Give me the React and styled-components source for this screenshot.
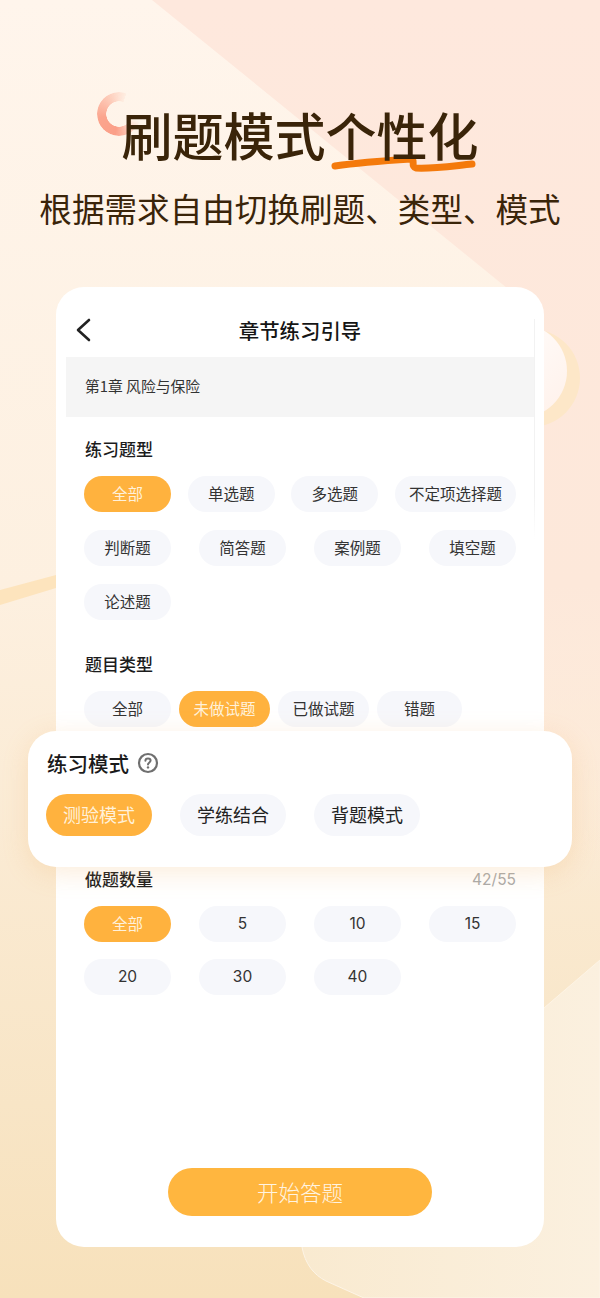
import React from 'react';
import styled, { createGlobalStyle } from 'styled-components';

const GlobalStyle = createGlobalStyle`
  html, body {
    margin: 0;
    padding: 0;
    background: #fbeeda;
  }
  * {
    box-sizing: border-box;
  }
`;

const Page = styled.div`
  position: relative;
  width: 600px;
  height: 1298px;
  overflow: hidden;
  display: flex;
  flex-direction: column;
  font-family: 'Noto Sans CJK SC', 'Noto Sans', sans-serif;
  background: linear-gradient(180deg, #fff5ec 0%, #fdf0e0 45%, #f8e5c6 85%, #f7e1bb 100%);
`;

const Backdrop = styled.svg`
  position: absolute;
  top: 0;
  left: 0;
  width: 600px;
  height: 1298px;
`;

const Hero = styled.header`
  position: relative;
  height: 287px;
  padding-top: 100px;
  display: flex;
  flex-direction: column;
  align-items: center;
`;

const Ring = styled.div`
  position: absolute;
  left: 97px;
  top: 92px;
  width: 44px;
  height: 44px;
  border-radius: 50%;
  background: conic-gradient(from 20deg, rgba(255, 190, 170, 0) 0deg, rgba(255, 190, 170, 0) 90deg, #fb9f88 170deg, #fba58e 240deg, #fdcdbb 310deg, rgba(255, 225, 210, 0.3) 360deg);
  -webkit-mask: radial-gradient(circle, transparent 12.5px, #000 13px);
  mask: radial-gradient(circle, transparent 12.5px, #000 13px);
`;

const Headline = styled.h1`
  position: relative;
  z-index: 0;
  margin: 0;
  font-size: 51px;
  line-height: 68px;
  font-weight: 500;
  color: #3a2409;
  white-space: nowrap;
`;

const Highlight = styled.span`
  position: relative;
  display: inline-block;
`;

const Scribble = styled.svg`
  position: absolute;
  z-index: -1;
  left: 0;
  top: 53px;
  width: 154px;
  height: 22px;
`;

const Subhead = styled.p`
  margin: 16px 0 0;
  font-size: 32.6px;
  line-height: 48px;
  font-weight: 400;
  color: #3a2409;
  white-space: nowrap;
`;

const Card = styled.main`
  position: relative;
  margin: 0 56px;
  height: 960px;
  padding: 0 10px 31px;
  display: flex;
  flex-direction: column;
  background: #fff;
  border-radius: 28px;
`;

const EdgeLine = styled.div`
  position: absolute;
  top: 32px;
  right: 9px;
  width: 1px;
  height: 220px;
  background: linear-gradient(180deg, #f2f2f2 0%, #f2f2f2 80%, rgba(242, 242, 242, 0) 100%);
`;

const NavBar = styled.div`
  position: relative;
  height: 70px;
  padding-top: 28px;
  display: flex;
  justify-content: center;
`;

const BackIcon = styled.svg`
  position: absolute;
  left: 8px;
  top: 30px;
  width: 18px;
  height: 26px;
`;

const NavTitle = styled.div`
  font-size: 20.4px;
  line-height: 30px;
  font-weight: 500;
  color: #151515;
`;

const Chapter = styled.div`
  height: 60px;
  padding: 0 0 3px 19px;
  display: flex;
  align-items: center;
  font-size: 14.8px;
  color: #333;
  background: #f5f5f5;
  white-space: pre;
`;

const Section = styled.section`
  margin-top: ${p => p.$top}px;
  padding: 0 18px;
`;

const SectionHead = styled.div`
  height: 24px;
  margin-bottom: 15px;
  display: flex;
  align-items: center;
  justify-content: space-between;
`;

const SectionTitle = styled.h2`
  margin: 0;
  padding-left: 1px;
  font-size: 17px;
  line-height: 24px;
  font-weight: 500;
  color: #1c1c1c;
`;

const Counter = styled.span`
  font-family: 'Inter', 'Liberation Sans', sans-serif;
  font-size: 15.5px;
  color: #aaa;
`;

const PillRow = styled.div`
  display: flex;
  gap: ${p => p.$gap}px;
  margin-bottom: ${p => p.$below || 0}px;
`;

const PillGrid = styled.div`
  display: grid;
  grid-template-columns: repeat(4, 87px);
  justify-content: space-between;
  row-gap: ${p => p.$rowGap}px;
`;

const Pill = styled.div`
  width: ${p => p.$width || 87}px;
  height: 36px;
  padding-bottom: 2px;
  display: flex;
  align-items: center;
  justify-content: center;
  border-radius: 18px;
  font-size: 15.5px;
  font-family: ${p => (p.$digits ? "'Inter', 'Liberation Sans', sans-serif" : 'inherit')};
  color: ${p => (p.$active ? '#fff1da' : '#333')};
  background: ${p => (p.$active ? '#ffb23e' : '#f6f7fb')};
`;

const ModePanel = styled.div`
  position: relative;
  z-index: 1;
  margin: 4px -38px 0;
  height: 136px;
  padding: 20px 18px 0;
  background: #fff;
  border-radius: 28px;
  box-shadow: 0 6px 26px rgba(240, 175, 90, 0.22);
`;

const ModeHead = styled.div`
  height: 24px;
  padding-left: 1px;
  margin-bottom: 19px;
  display: flex;
  align-items: center;
  gap: 8px;
`;

const ModeTitle = styled.h2`
  margin: 0;
  font-size: 20.5px;
  line-height: 24px;
  font-weight: 500;
  color: #1a1a1a;
`;

const HelpIcon = styled.svg`
  width: 22px;
  height: 22px;
`;

const ModeRow = styled.div`
  display: flex;
  gap: 28px;
`;

const ModePill = styled.div`
  width: 106px;
  height: 42px;
  padding-bottom: 2px;
  display: flex;
  align-items: center;
  justify-content: center;
  border-radius: 21px;
  font-size: 18px;
  color: ${p => (p.$active ? '#fff1da' : '#222')};
  background: ${p => (p.$active ? '#ffb23e' : '#f6f7fb')};
`;

const StartButton = styled.button`
  align-self: center;
  margin-top: auto;
  width: 264px;
  height: 48px;
  padding: 0 0 2px;
  border: 0;
  border-radius: 24px;
  font-family: inherit;
  font-size: 21.5px;
  font-weight: 300;
  color: #fff4e2;
  background: #ffb63f;
`;

const kinds = ['判断题', '简答题', '案例题', '填空题', '论述题'];
const counts = ['全部', '5', '10', '15', '20', '30', '40'];

export default function App() {
  return (
    <>
      <GlobalStyle />
      <Page>
        <Backdrop viewBox="0 0 600 1298">
          <defs>
            <linearGradient id="blush" x1="0" y1="0" x2="0" y2="1">
              <stop offset="0" stopColor="#fee8dd" />
              <stop offset="0.65" stopColor="#fde8da" />
              <stop offset="1" stopColor="#fde8da" stopOpacity="0" />
            </linearGradient>
            <linearGradient id="halo" x1="0" y1="0" x2="1" y2="1">
              <stop offset="0" stopColor="#fff" />
              <stop offset="1" stopColor="#fff1ea" />
            </linearGradient>
            <linearGradient id="tint" x1="0" y1="0" x2="1" y2="0">
              <stop offset="0" stopColor="#f9ead0" />
              <stop offset="1" stopColor="#fbf0df" />
            </linearGradient>
          </defs>
          <path d="M152 0 H600 V900 H544 V318 Z" fill="url(#blush)" />
          <circle cx="531" cy="378" r="49" fill="#fde7c8" />
          <circle cx="520" cy="371" r="47" fill="url(#halo)" />
          <path d="M0 590 L56 575 V588 L0 605 Z" fill="#fde4bd" />
          <path
            d="M302 1247 C305 1264 314 1275 326 1281 L364 1298 H600 V960 L544 1008 L302 1200 Z"
            fill="url(#tint)"
            stroke="#fdf4e6"
            strokeWidth="1"
          />
        </Backdrop>
        <Hero>
          <Ring />
          <Headline>
            刷题模式
            <Highlight>
              个性化
              <Scribble viewBox="0 0 154 22" fill="none">
                <path
                  d="M9 13 C30 10 54 8 85 6 C90 7 84 13 90 15 C106 16 126 13 146 11"
                  stroke="#f47a0c"
                  strokeWidth="7"
                  strokeLinecap="round"
                  strokeLinejoin="round"
                />
              </Scribble>
            </Highlight>
          </Headline>
          <Subhead>根据需求自由切换刷题、类型、模式</Subhead>
        </Hero>
        <Card>
          <EdgeLine />
          <NavBar>
            <BackIcon viewBox="0 0 18 26" fill="none">
              <path d="M15 3 L4 13 L15 23" stroke="#222" strokeWidth="2.6" strokeLinecap="round" strokeLinejoin="round" />
            </BackIcon>
            <NavTitle>章节练习引导</NavTitle>
          </NavBar>
          <Chapter>第1章 风险与保险</Chapter>
          <Section $top={20}>
            <SectionHead>
              <SectionTitle>练习题型</SectionTitle>
            </SectionHead>
            <PillRow $gap={16.67} $below={18}>
              <Pill $active>全部</Pill>
              <Pill>单选题</Pill>
              <Pill>多选题</Pill>
              <Pill $width={121}>不定项选择题</Pill>
            </PillRow>
            <PillGrid $rowGap={18}>
              {kinds.map(k => (
                <Pill key={k}>{k}</Pill>
              ))}
            </PillGrid>
          </Section>
          <Section $top={32}>
            <SectionHead>
              <SectionTitle>题目类型</SectionTitle>
            </SectionHead>
            <PillRow $gap={8}>
              <Pill>全部</Pill>
              <Pill $active $width={91}>未做试题</Pill>
              <Pill $width={91}>已做试题</Pill>
              <Pill $width={85}>错题</Pill>
            </PillRow>
          </Section>
          <ModePanel>
            <ModeHead>
              <ModeTitle>练习模式</ModeTitle>
              <HelpIcon viewBox="0 0 22 22" fill="none">
                <circle cx="11" cy="11" r="9" stroke="#6f6f6f" strokeWidth="2.2" />
                <path d="M8.4 8.8 C8.4 7.2 9.6 6.4 11 6.4 C12.5 6.4 13.6 7.3 13.6 8.6 C13.6 10.4 11 10.5 11 12.6" stroke="#6f6f6f" strokeWidth="2" strokeLinecap="round" />
                <circle cx="11" cy="15.4" r="1.2" fill="#6f6f6f" />
              </HelpIcon>
            </ModeHead>
            <ModeRow>
              <ModePill $active>测验模式</ModePill>
              <ModePill>学练结合</ModePill>
              <ModePill>背题模式</ModePill>
            </ModeRow>
          </ModePanel>
          <Section $top={0}>
            <SectionHead>
              <SectionTitle>做题数量</SectionTitle>
              <Counter>42/55</Counter>
            </SectionHead>
            <PillGrid $rowGap={17}>
              {counts.map((c, i) => (
                <Pill key={c} $active={i === 0} $digits={i > 0}>{c}</Pill>
              ))}
            </PillGrid>
          </Section>
          <StartButton>开始答题</StartButton>
        </Card>
      </Page>
    </>
  );
}
